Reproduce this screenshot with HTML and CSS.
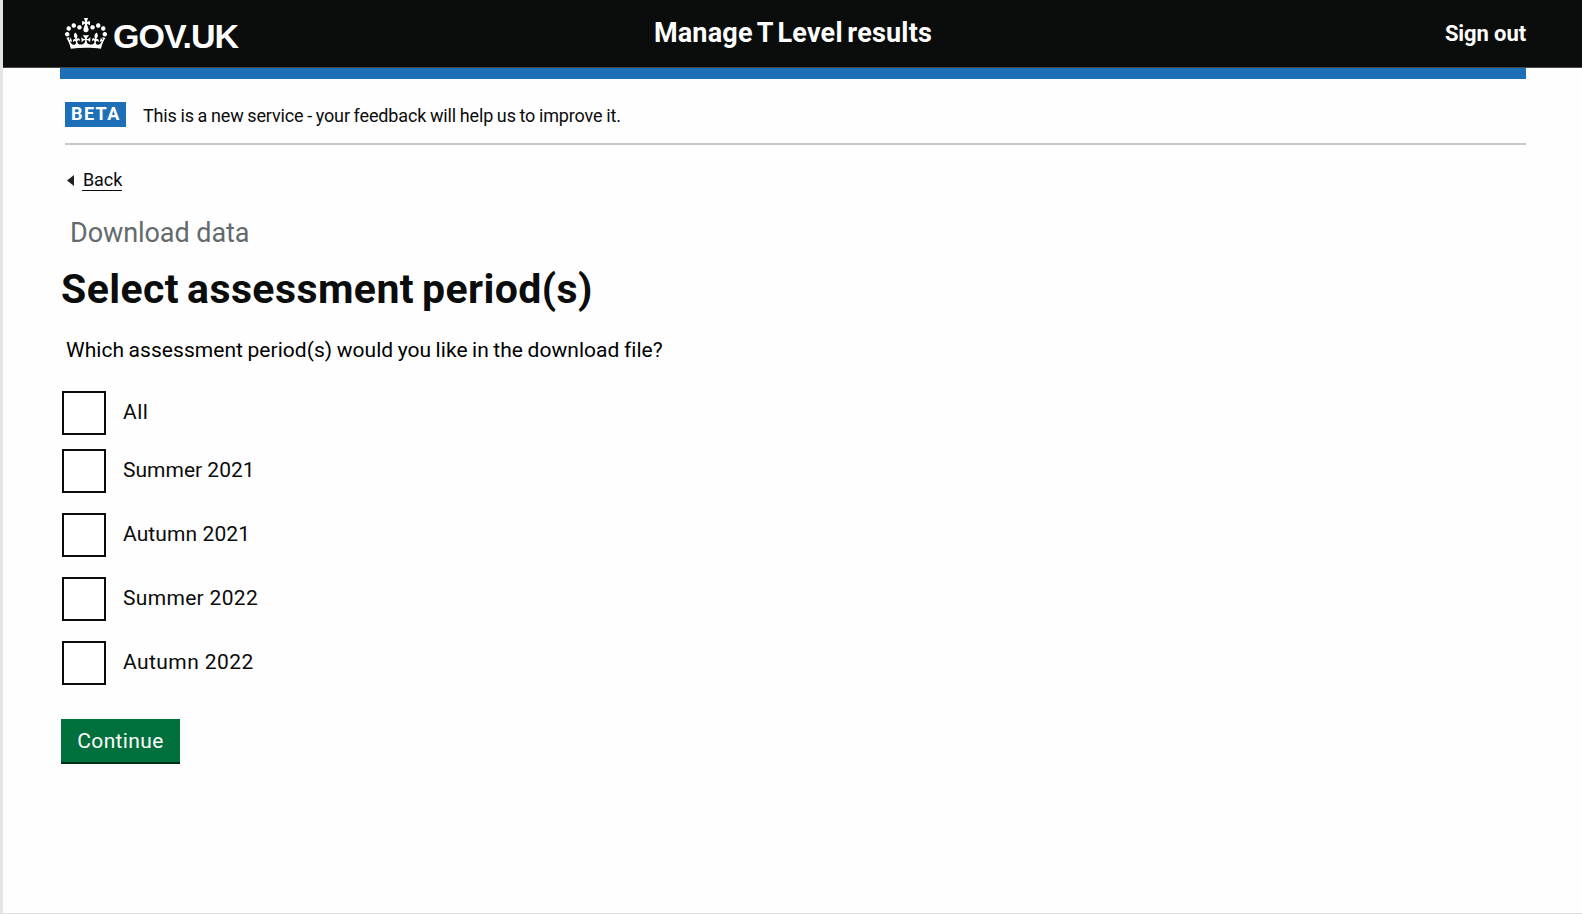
FILE: index.html
```html
<!DOCTYPE html>
<html lang="en">
<head>
<meta charset="utf-8">
<title>Select assessment period(s) - Manage T Level results</title>
<link rel="stylesheet" href="styles.css">
</head>
<body>
<div class="page">
  <header class="header">
    <a class="logo" href="#">
      <svg class="crown" viewBox="0 0 132 97" width="42" height="31" preserveAspectRatio="none" aria-hidden="true"><path fill="currentColor" fill-rule="evenodd" d="M25 30.2c3.5 1.5 7.7-.2 9.1-3.7 1.5-3.6-.2-7.8-3.9-9.2-3.6-1.4-7.6.3-9.1 3.9-1.4 3.5.3 7.5 3.9 9zM9 39.5c3.6 1.5 7.8-.2 9.2-3.7 1.5-3.6-.2-7.8-3.9-9.1-3.6-1.5-7.6.2-9.1 3.8-1.4 3.5.3 7.5 3.8 9zM4.4 57.2c3.5 1.5 7.7-.2 9.1-3.8 1.5-3.6-.2-7.7-3.9-9.1-3.5-1.5-7.6.3-9.1 3.8-1.4 3.5.3 7.6 3.9 9.1zm38.3-21.4c3.5 1.5 7.7-.2 9.1-3.8 1.5-3.6-.2-7.7-3.9-9.1-3.6-1.5-7.6.3-9.1 3.8-1.3 3.6.4 7.7 3.9 9.1zm64.4-5.6c-3.6 1.5-7.8-.2-9.1-3.7-1.5-3.6.2-7.8 3.8-9.2 3.6-1.4 7.7.3 9.2 3.9 1.3 3.5-.4 7.5-3.9 9zm15.9 9.3c-3.6 1.5-7.7-.2-9.1-3.7-1.5-3.6.2-7.8 3.7-9.1 3.6-1.5 7.7.2 9.2 3.8 1.5 3.5-.3 7.5-3.8 9zm4.7 17.7c-3.6 1.5-7.8-.2-9.2-3.8-1.5-3.6.2-7.7 3.9-9.1 3.6-1.5 7.7.3 9.2 3.8 1.3 3.5-.4 7.6-3.9 9.1zM89.3 35.8c-3.6 1.5-7.8-.2-9.2-3.8-1.4-3.6.2-7.7 3.9-9.1 3.6-1.5 7.7.3 9.2 3.8 1.4 3.6-.3 7.7-3.9 9.1zM69.7 17.7l8.9 4.7V9.3l-8.9 2.8c-.2-.3-.5-.6-.9-.9L72.4 0H59.6l3.5 11.2c-.3.3-.6.5-.9.9l-8.8-2.8v13.1l8.8-4.7c.3.3.6.7.9.9l-5 15.4v.1c-.2.8-.4 1.6-.4 2.4 0 4.1 3.1 7.5 7 8.1h.2c.3 0 .7.1 1 .1.4 0 .7 0 1-.1h.2c4-.6 7.1-4.1 7.1-8.1 0-.8-.1-1.7-.4-2.4V34l-5.1-15.4c.4-.2.7-.6 1-.9zM66 92.8c16.9 0 32.8 1.1 47.1 3.2 4-16.9 8.9-26.7 14-33.5l-9.6-3.4c1 4.9 1.1 7.2 0 10.2-1.5-1.4-3-4.3-4.2-8.7L108.6 76c2.8-2 5-3.2 7.5-3.3-4.4 9.4-10 11.9-13.6 11.2-4.3-.8-6.3-4.6-5.6-7.9 1-4.7 5.7-5.9 8-.5 4.3-8.7-3-11.4-7.6-8.8 7.1-7.2 7.9-13.5 2.1-21.1-8 6.1-8.1 12.3-4.5 20.8-4.7-5.4-12.1-2.5-9.5 6.2 3.4-5.2 7.9-2 7.2 3.1-.6 4.3-6.4 7.8-13.5 7.2-10.3-.9-10.9-8-11.2-13.8 2.5-.5 7.1 1.8 11 7.3L80.2 60c-4.1 4.4-8 5.3-12.3 5.4 1.4-4.4 8-11.6 8-11.6H55.5s6.4 7.2 7.9 11.6c-4.2-.1-8-1-12.3-5.4l1.4 16.4c3.9-5.5 8.5-7.7 10.9-7.3-.3 5.8-.9 12.8-11.1 13.8-7.2.6-12.9-2.9-13.5-7.2-.7-5 3.8-8.3 7.1-3.1 2.7-8.7-4.6-11.6-9.4-6.2 3.7-8.5 3.6-14.7-4.6-20.8-5.8 7.6-5 13.9 2.2 21.1-4.7-2.6-11.9.1-7.7 8.8 2.3-5.5 7.1-4.2 8.1.5.7 3.3-1.3 7.1-5.7 7.9-3.5.7-9-1.8-13.5-11.2 2.5.1 4.7 1.3 7.5 3.3l-4.7-15.4c-1.2 4.4-2.7 7.2-4.3 8.7-1.1-3-.9-5.3 0-10.2l-9.5 3.4c5 6.9 9.9 16.7 14 33.5 14.8-2.1 30.8-3.2 47.7-3.2z"/></svg>
      <span class="logo-text">GOV.UK</span>
    </a>
    <span class="service">Manage T Level results</span>
    <a class="sign-out" href="#">Sign out</a>
  </header>
  <div class="bar"></div>
  <div class="phase">
    <strong class="tag">BETA</strong>
    <span class="phase-text">This is a new service - your feedback will help us to improve it.</span>
  </div>
  <main class="main">
    <a class="back" href="#">
      <svg width="7" height="11" viewBox="0 0 7 11" aria-hidden="true"><path d="M7 0v11L0 5.5z" fill="#231f20"/></svg>
      <span class="back-text">Back</span>
    </a>
    <span class="caption">Download data</span>
    <h1 class="heading">Select assessment period(s)</h1>
    <p class="question">Which assessment period(s) would you like in the download file?</p>
    <form class="form">
      <label class="option option-all"><input class="box" type="checkbox"><span>All</span></label>
      <label class="option summer21"><input class="box" type="checkbox"><span>Summer 2021</span></label>
      <label class="option autumn21"><input class="box" type="checkbox"><span>Autumn 2021</span></label>
      <label class="option summer22"><input class="box" type="checkbox"><span>Summer 2022</span></label>
      <label class="option autumn22"><input class="box" type="checkbox"><span>Autumn 2022</span></label>
      <button class="button" type="button">Continue</button>
    </form>
  </main>
</div>
</body>
</html>
```
FILE: styles.css
```css
* { box-sizing: border-box; }
body { margin: 0; background: #fefefe; color: #0b0c0c; font-family: Roboto, "Liberation Sans", sans-serif; }
a { color: inherit; text-decoration: none; }
svg { display: block; }
.page { height: 914px; border-left: 3px solid #e4e4e4; border-bottom: 1px solid #e0e0e0; overflow: hidden; }
.header { display: grid; grid-template-columns: 1fr auto 1fr; height: 68px; padding: 0 56px 0 62px; background: #0b0c0c; border-bottom: 1px solid #474848; color: #fff; }
.logo { display: flex; gap: 6px; padding-top: 18px; }
.logo-text { font: 700 34px/36px "Liberation Sans", Arial, sans-serif; letter-spacing: -1px; }
.service { padding-right: 5px; font-size: 27px; font-weight: 700; line-height: 66px; letter-spacing: 0.2px; word-spacing: -2.3px; }
.sign-out { justify-self: end; font-size: 22px; font-weight: 700; line-height: 67px; letter-spacing: -0.1px; }
.bar { height: 11px; margin: 0 56px 0 57px; background: #1d70b8; }
.phase { display: flex; align-items: flex-start; gap: 16px; height: 66px; margin: 0 56px 0 62px; padding-top: 23px; border-bottom: 2px solid #c8c8c8; }
.tag { width: 61px; height: 25px; margin-right: 1px; padding-left: 6px; background: #1d70b8; color: #fff; font-size: 18px; line-height: 24px; letter-spacing: 1.4px; }
.phase-text { padding-top: 1px; font-size: 18px; line-height: 25px; letter-spacing: -0.14px; word-spacing: -0.6px; }
.main { display: flex; flex-direction: column; align-items: flex-start; padding: 25px 0 0 58px; }
.back { display: flex; align-items: center; gap: 8px; padding-left: 6px; font-size: 18px; line-height: 20px; }
.back-text { padding-left: 1px; border-bottom: 1px solid #0b0c0c; letter-spacing: -0.1px; }
.caption { margin-top: 26px; padding-left: 9px; color: #626a6e; font-size: 27px; line-height: 32px; letter-spacing: -0.07px; }
.heading { margin: 16px 0 0; font-size: 41px; font-weight: 700; line-height: 48px; letter-spacing: 0.42px; word-spacing: -2.7px; }
.question { margin: 24px 0 0; padding-left: 5px; color: #000; font-size: 21px; line-height: 26px; letter-spacing: 0.05px; word-spacing: -0.8px; }
.form { display: flex; flex-direction: column; align-items: flex-start; gap: 20px; margin-top: 28px; }
.option { display: flex; align-items: center; gap: 17px; padding-left: 1px; font-size: 21px; line-height: 42px; }
.option span { margin-top: -2px; }
.option-all { margin-bottom: -6px; letter-spacing: 0.5px; }
.box { appearance: none; width: 44px; height: 44px; margin: 0; border: 2px solid #0b0c0c; background: #fff; }
.summer21 { letter-spacing: 0; }
.autumn21 { letter-spacing: 0.1px; }
.summer22 { letter-spacing: 0.32px; }
.autumn22 { letter-spacing: 0.42px; }
.button { width: 119px; height: 45px; margin-top: 14px; padding: 1px 0 0; border: 0; border-bottom: 2px solid #002d18; background: #00703c; color: #fff; font-family: inherit; font-size: 21px; line-height: 42px; letter-spacing: 0.37px; }
```
